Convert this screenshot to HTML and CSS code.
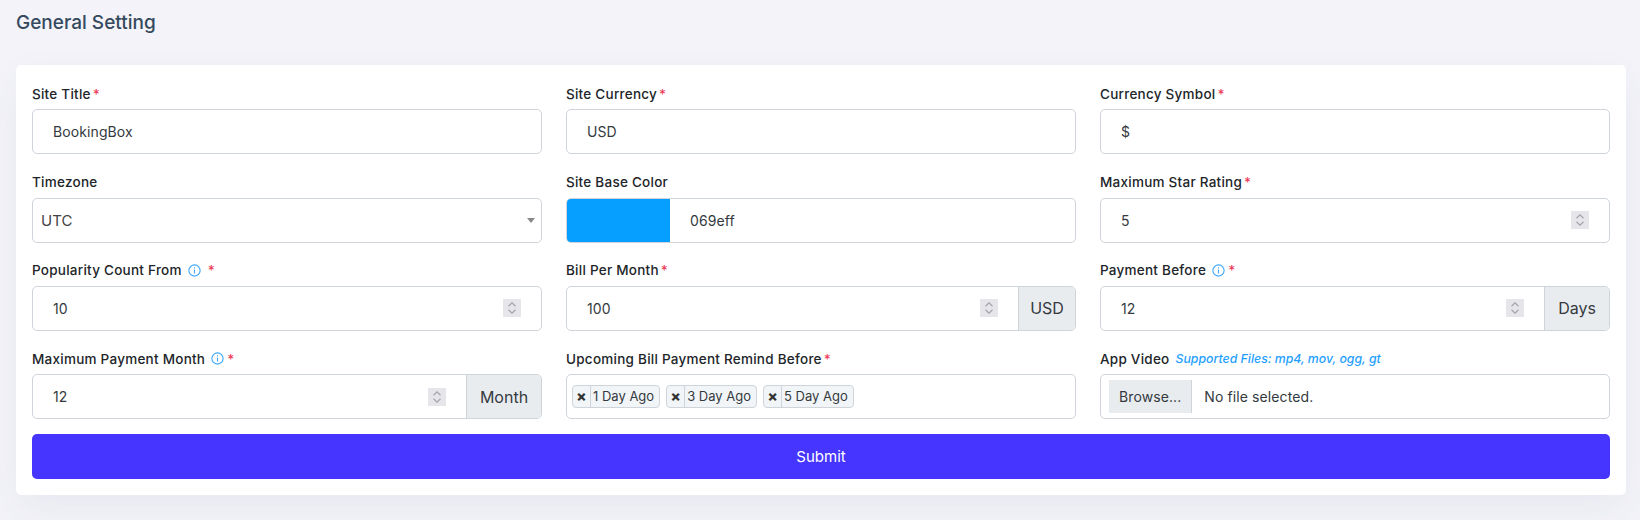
FILE: index.html
```html
<!DOCTYPE html>
<html lang="en">
<head>
    <meta charset="UTF-8">
    <title>General Setting</title>
    <link rel="stylesheet" href="styles.css">
</head>
<body>
    <svg class="icon-defs" width="0" height="0">
        <symbol id="info" viewBox="0 0 12 12">
            <circle cx="6" cy="6" r="5.2" fill="none" stroke="currentColor" stroke-width="1"/>
            <rect x="5.5" y="5.2" width="1" height="3.6" fill="currentColor"/>
            <rect x="5.5" y="3.1" width="1" height="1.1" fill="currentColor"/>
        </symbol>
        <symbol id="spin" viewBox="0 0 18 18">
            <rect width="18" height="18" fill="#e6e6ea"/>
            <path d="M5.5 7.2 9 3.8l3.5 3.4M5.5 10.8 9 14.2l3.5-3.4" fill="none" stroke="#a5a5ad" stroke-width="1.3"/>
        </symbol>
    </svg>

    <h1 class="page-title">General Setting</h1>

    <form class="card">
        <div class="field">
            <div class="label">Site Title<span class="req">*</span></div>
            <div class="control"><span class="value">BookingBox</span></div>
        </div>
        <div class="field">
            <div class="label">Site Currency<span class="req">*</span></div>
            <div class="control"><span class="value">USD</span></div>
        </div>
        <div class="field">
            <div class="label">Currency Symbol<span class="req">*</span></div>
            <div class="control"><span class="value">$</span></div>
        </div>

        <div class="field">
            <div class="label">Timezone</div>
            <div class="control select"><span class="value">UTC</span><i class="caret"></i></div>
        </div>
        <div class="field">
            <div class="label">Site Base Color</div>
            <div class="control color"><i class="swatch"></i><span class="value">069eff</span></div>
        </div>
        <div class="field">
            <div class="label">Maximum Star Rating<span class="req">*</span></div>
            <div class="control">
                <span class="value">5</span>
                <svg class="spin"><use href="#spin"/></svg>
            </div>
        </div>

        <div class="field">
            <div class="label">Popularity Count From<svg class="info"><use href="#info"/></svg><span class="req wide">*</span></div>
            <div class="control">
                <span class="value">10</span>
                <svg class="spin"><use href="#spin"/></svg>
            </div>
        </div>
        <div class="field">
            <div class="label">Bill Per Month<span class="req">*</span></div>
            <div class="control">
                <span class="value">100</span>
                <svg class="spin"><use href="#spin"/></svg>
                <span class="addon addon-usd">USD</span>
            </div>
        </div>
        <div class="field">
            <div class="label">Payment Before<svg class="info"><use href="#info"/></svg><span class="req">*</span></div>
            <div class="control">
                <span class="value">12</span>
                <svg class="spin"><use href="#spin"/></svg>
                <span class="addon addon-days">Days</span>
            </div>
        </div>

        <div class="field">
            <div class="label">Maximum Payment Month<svg class="info"><use href="#info"/></svg><span class="req">*</span></div>
            <div class="control">
                <span class="value">12</span>
                <svg class="spin"><use href="#spin"/></svg>
                <span class="addon addon-month">Month</span>
            </div>
        </div>
        <div class="field">
            <div class="label">Upcoming Bill Payment Remind Before<span class="req">*</span></div>
            <div class="control tags">
                <span class="tag"><b class="tag-x">×</b><span class="tag-text">1 Day Ago</span></span>
                <span class="tag"><b class="tag-x">×</b><span class="tag-text">3 Day Ago</span></span>
                <span class="tag"><b class="tag-x">×</b><span class="tag-text">5 Day Ago</span></span>
            </div>
        </div>
        <div class="field">
            <div class="label">App Video<em class="hint">Supported Files: mp4, mov, ogg, gt</em></div>
            <div class="control file">
                <span class="browse">Browse...</span>
                <span class="file-name">No file selected.</span>
            </div>
        </div>

        <button type="button" class="submit">Submit</button>
    </form>
</body>
</html>
```

FILE: styles.css
```css
body {
    margin: 0;
    padding: 0 14px 0 16px;
    height: 520px;
    box-sizing: border-box;
    overflow: hidden;
    background: #f3f3f9;
    font-family: 'Inter', 'Open Sans', sans-serif;
    color: #212529;
}
.icon-defs {
    position: absolute;
}
.page-title {
    margin: 0;
    padding-top: 12px;
    height: 65px;
    box-sizing: border-box;
    font-size: 19px;
    line-height: 22px;
    font-weight: 500;
    color: #34495e;
}
.card {
    display: grid;
    grid-template-columns: repeat(3, 1fr);
    column-gap: 24px;
    row-gap: 16px;
    padding: 17px 16px 16px;
    background: #fff;
    border-radius: 5px;
    box-shadow: 0 15px 40px rgba(60, 60, 100, 0.06);
}
.label {
    display: flex;
    align-items: center;
    height: 22.3px;
    margin-bottom: 5px;
    padding-top: 1px;
    box-sizing: border-box;
    font-size: 13.5px;
    font-weight: 500;
    letter-spacing: 0.25px;
    white-space: nowrap;
}
.req {
    margin-left: 2px;
    color: #ea3a57;
}
.info {
    width: 13px;
    height: 13px;
    margin-left: 6px;
    color: #3aa6ff;
}
.info + .req {
    margin-left: 3px;
}
.info + .req.wide {
    margin-left: 7px;
}
.hint {
    margin-left: 6px;
    font-size: 12.3px;
    font-weight: 500;
    letter-spacing: 0;
    color: #1f9fff;
}
.control {
    display: flex;
    align-items: center;
    height: 45px;
    box-sizing: border-box;
    border: 1px solid #ced4da;
    border-radius: 5px;
    overflow: hidden;
    font-size: 14px;
    letter-spacing: 0.1px;
    color: #343a40;
}
.value {
    flex: 1;
    padding-left: 20px;
}
.spin {
    width: 18px;
    height: 18px;
    margin-right: 20px;
    flex: none;
}
.addon {
    align-self: stretch;
    display: flex;
    align-items: center;
    justify-content: center;
    box-sizing: border-box;
    background: #e9ecef;
    border-left: 1px solid #ced4da;
    font-size: 16px;
    letter-spacing: 0;
}
.addon-usd {
    width: 57px;
}
.addon-days {
    width: 65px;
}
.addon-month {
    width: 75px;
}
.select .value {
    padding-left: 8px;
    font-size: 15px;
    letter-spacing: 0;
    color: #444;
}
.caret {
    margin-right: 6px;
    border-left: 4px solid transparent;
    border-right: 4px solid transparent;
    border-top: 5px solid #888;
}
.swatch {
    align-self: stretch;
    width: 103px;
    background: #069eff;
}
.tags {
    gap: 6px;
    padding-left: 5px;
}
.tag {
    display: flex;
    align-items: stretch;
    height: 23px;
    box-sizing: border-box;
    background: #f2f5f7;
    border: 1px solid #ced4da;
    border-radius: 4px;
    font-size: 13px;
    letter-spacing: 0;
}
.tag-x {
    width: 17px;
    line-height: 20px;
    text-align: center;
    border-right: 1px solid #ced4da;
    font-size: 15px;
    font-weight: 800;
    color: #333;
}
.tag-text {
    padding: 0 5px 0 2px;
    line-height: 21px;
}
.file .browse {
    display: flex;
    align-items: center;
    height: 33px;
    box-sizing: border-box;
    margin-left: 8px;
    padding: 0 10px;
    background: #e9ecef;
    border-right: 1px solid #ced4da;
}
.file-name {
    margin-left: 12px;
}
.submit {
    grid-column: 1 / -1;
    height: 45px;
    margin-top: -1px;
    border: none;
    border-radius: 5px;
    background: #4634ff;
    color: #fff;
    font-family: inherit;
    font-size: 15px;
    font-weight: 400;
}
```
